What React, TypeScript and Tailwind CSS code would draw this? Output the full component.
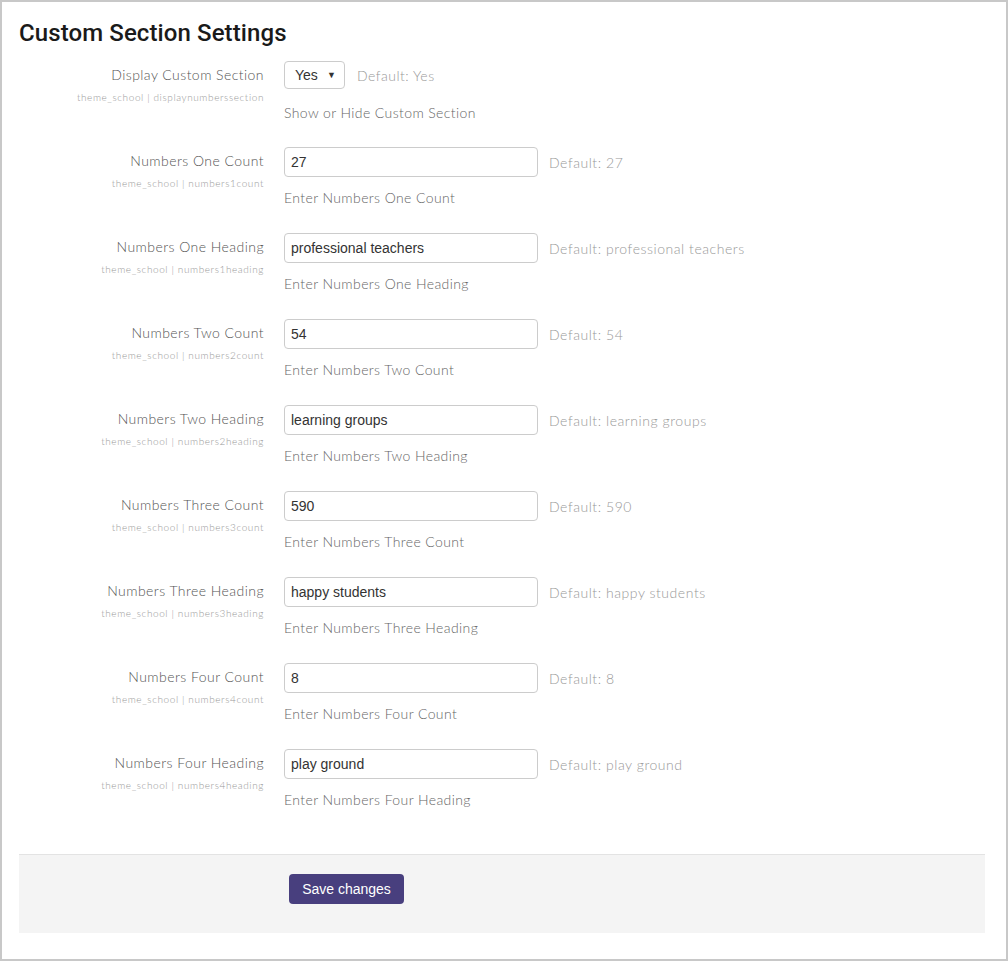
import React from "react"

const FONT = { fontFamily: "Lato, 'Open Sans', sans-serif" }
const ARIAL = { fontFamily: "'Liberation Sans', Arial, sans-serif" }

const rows = [
  { label: "Numbers One Count", key: "numbers1count", value: "27", desc: "Enter Numbers One Count" },
  { label: "Numbers One Heading", key: "numbers1heading", value: "professional teachers", desc: "Enter Numbers One Heading" },
  { label: "Numbers Two Count", key: "numbers2count", value: "54", desc: "Enter Numbers Two Count" },
  { label: "Numbers Two Heading", key: "numbers2heading", value: "learning groups", desc: "Enter Numbers Two Heading" },
  { label: "Numbers Three Count", key: "numbers3count", value: "590", desc: "Enter Numbers Three Count" },
  { label: "Numbers Three Heading", key: "numbers3heading", value: "happy students", desc: "Enter Numbers Three Heading" },
  { label: "Numbers Four Count", key: "numbers4count", value: "8", desc: "Enter Numbers Four Count" },
  { label: "Numbers Four Heading", key: "numbers4heading", value: "play ground", desc: "Enter Numbers Four Heading" },
]

function Label({ label, id }: { label: string; id: string }) {
  return (
    <div className="w-[245px] shrink-0 text-right pt-[4px]">
      <div className="text-[14px] leading-[20px] text-[#555] font-light tracking-[0.45px]">{label}</div>
      <div className="mt-[5px] text-[10px] leading-[14px] text-[#999] font-light tracking-[0.6px]">theme_school | {id}</div>
    </div>
  )
}

export default function App() {
  return (
    <div className="w-[1008px] h-[961px] border-2 border-[#c8c8c8] bg-white pl-[17px] pr-[20px] pt-[17px]" style={FONT}>
      <h2 className="text-[24px] leading-[29px] font-medium text-[#1a1a1a] tracking-[0.1px]" style={{ fontFamily: "Roboto, sans-serif" }}>
        Custom Section Settings
      </h2>

      <div className="mt-[13px]">
        {/* display toggle */}
        <div className="flex h-[86px]">
          <Label label="Display Custom Section" id="displaynumberssection" />
          <div className="pl-[20px]">
            <div className="flex items-center">
              <div className="w-[61px] h-[28px] border border-[#ccc] rounded-[4px] flex items-center justify-between pl-[10px] pr-[8px]">
                <span className="text-[14px] text-[#333]" style={ARIAL}>Yes</span>
                <span className="text-[9px] text-[#333]">▼</span>
              </div>
              <span className="ml-[12px] text-[14px] text-[#999] font-light tracking-[0.5px]">Default: Yes</span>
            </div>
            <div className="mt-[14px] text-[14px] leading-[20px] text-[#666] font-light tracking-[0.4px]">Show or Hide Custom Section</div>
          </div>
        </div>

        {rows.map((r) => (
          <div key={r.key} className="flex h-[86px]">
            <Label label={r.label} id={r.key} />
            <div className="pl-[20px]">
              <div className="flex items-center">
                <div
                  className="w-[254px] h-[30px] border border-[#ccc] rounded-[4px] flex items-center px-[6px] text-[14px] text-[#333]"
                  style={ARIAL}
                >
                  {r.value}
                </div>
                <span className="ml-[11px] text-[14px] text-[#999] font-light tracking-[0.55px]">Default: {r.value}</span>
              </div>
              <div className="mt-[11px] text-[14px] leading-[20px] text-[#666] font-light tracking-[0.4px]">{r.desc}</div>
            </div>
          </div>
        ))}
      </div>

      <div className="mt-[19px] w-[966px] h-[79px] bg-[#f4f4f4] border-t border-[#e3e3e3] pl-[270px] pt-[19px]">
        <button
          type="button"
          className="w-[115px] h-[30px] rounded-[4px] bg-[#483f7e] text-white text-[14px]"
          style={ARIAL}
        >
          Save changes
        </button>
      </div>
    </div>
  )
}
